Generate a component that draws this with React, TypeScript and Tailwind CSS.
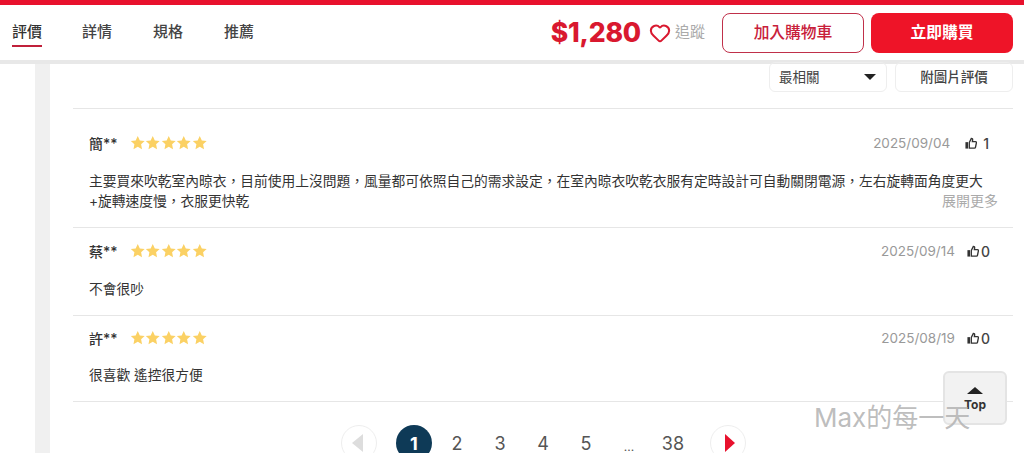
import { Heart } from 'lucide-react'

const cjk = "font-['Inter','Noto_Sans_CJK_TC',sans-serif]"

const reviews = [
  {
    name: '簡**',
    date: '2025/09/04',
    likes: '1',
    lines: [
      '主要買來吹乾室內晾衣，目前使用上沒問題，風量都可依照自己的需求設定，在室內晾衣吹乾衣服有定時設計可自動關閉電源，左右旋轉面角度更大',
      '+旋轉速度慢，衣服更快乾',
    ],
    more: true,
    rowClass: 'pt-[12px] pb-[16px]',
    bodyClass: 'mt-[18px]',
  },
  { name: '蔡**', date: '2025/09/14', likes: '0', lines: ['不會很吵'], rowClass: 'pt-[13px] pb-[16px]', bodyClass: 'mt-[18px]' },
  { name: '許**', date: '2025/08/19', likes: '0', lines: ['很喜歡 遙控很方便'], rowClass: 'pt-[12px] pb-[16px]', bodyClass: 'mt-[17px]' },
]

const Star = () => (
  <svg viewBox="0 0 24 24" className="w-[15.5px] h-[15.5px] fill-[#fbd164]">
    <path d="M12 1.5l3.2 6.9 7.5.9-5.5 5.2 1.4 7.4L12 18.2l-6.6 3.7 1.4-7.4L1.3 9.3l7.5-.9z" />
  </svg>
)

const Thumb = () => (
  <svg viewBox="0 0 14 14" className="w-[12px] h-[12px] text-[#333]">
    <rect x="0.5" y="6" width="3" height="7.5" fill="currentColor" />
    <path
      d="M5 6.5 7.4 1.6c1 0 1.6.7 1.5 1.7L8.6 5.4h3.6c.8 0 1.3.7 1.1 1.4l-1.1 5.2c-.1.6-.6 1-1.2 1H5z"
      fill="none"
      stroke="currentColor"
      strokeWidth="1.6"
    />
  </svg>
)

const ReviewRow = ({ review }: { review: (typeof reviews)[number] }) => (
  <article className={`border-b border-[#e6e6e6] pl-[16px] pr-[23px] ${review.rowClass}`}>
    <div className="flex items-center h-[20px]">
      <span className="text-[14px] font-medium text-[#333] w-[40.5px]">{review.name}</span>
      <div className="flex">
        {[0, 1, 2, 3, 4].map((i) => (
          <Star key={i} />
        ))}
      </div>
      <span className="ml-auto text-[13.5px] text-[#999]">{review.date}</span>
      <span className={`flex items-center font-medium text-[#444] text-[14px] ${review.more ? 'ml-[15px] gap-[6px] pr-[1px]' : 'ml-[12px] gap-[2px]'}`}>
        <Thumb />
        {review.likes}
      </span>
    </div>
    <div className={`${review.bodyClass} text-[13.75px] leading-[20px] text-[#333] relative`}>
      {review.lines.map((line) => (
        <p key={line} className="whitespace-nowrap">{line}</p>
      ))}
      {review.more && (
        <span className="absolute right-[-8px] bottom-0 text-[14px] text-[#aaa]">展開更多</span>
      )}
    </div>
  </article>
)

export default function App() {
  return (
    <div className={`relative w-[1024px] h-[453px] overflow-hidden bg-white ${cjk}`}>
      <header className="h-[64px] border-t-[5px] border-t-[#e8112d] border-b-[4px] border-b-[#e8e8e8] flex items-center justify-between pl-[12px] pr-[11px]">
        <nav className="flex gap-[41px] text-[15px] font-medium text-[#444]">
          <a className="text-[#333] border-b-2 border-[#c0203a] pb-[2px] mt-[3px] -mr-[1px]">評價</a>
          <a className="mt-[3px]">詳情</a>
          <a className="mt-[3px]">規格</a>
          <a className="mt-[3px]">推薦</a>
        </nav>
        <div className="flex items-center">
          <span className="text-[26.5px] font-extrabold text-[#d9182f] tracking-[-0.2px]">$1,280</span>
          <Heart size={22} strokeWidth={2.2} className="ml-[8px] text-[#d9182f]" />
          <span className="ml-[4px] text-[15px] text-[#aaa]">追蹤</span>
          <button className="ml-[17px] w-[142px] h-[40px] rounded-[8px] border border-[#c0304a] text-[15.75px] font-medium text-[#c8203a]">
            加入購物車
          </button>
          <button className="ml-[7px] w-[142px] h-[40px] rounded-[8px] bg-[#ee1428] text-[15.75px] font-bold text-white">
            立即購買
          </button>
        </div>
      </header>

      <div className="flex">
        <div className="ml-[35px] w-[15px] h-[389px] bg-[#f0f0f0]" />
        <main className="ml-[23px] w-[940px]">
          <div className="flex justify-end gap-[8px] h-[45px] border-b border-[#e6e6e6]">
            <button className="w-[118px] h-[30px] -mt-[2px] px-[9px] flex items-center justify-between rounded-[6px] border border-[#eee] text-[13.5px] text-[#444]">
              最相關
              <span className="mr-[1px] border-x-[6px] border-x-transparent border-t-[6px] border-t-[#222]" />
            </button>
            <button className="w-[118px] h-[30px] -mt-[2px] rounded-[6px] border border-[#eee] text-[13.5px] font-medium text-[#444]">
              附圖片評價
            </button>
          </div>
          <div className="mt-[12px] flex flex-col">
            <ReviewRow review={reviews[0]} />
            <ReviewRow review={reviews[1]} />
            <ReviewRow review={reviews[2]} />
          </div>
          <nav className="mt-[23px] ml-[268px] flex items-center text-[18px] text-[#555]">
            <span className="w-[36px] h-[36px] rounded-full border border-[#eee] flex items-center justify-center">
              <span className="border-y-[9px] border-y-transparent border-r-[11px] border-r-[#ddd] mr-[3px]" />
            </span>
            <span className="ml-[19px] w-[36px] h-[36px] rounded-full bg-[#0e3a57] text-white font-bold flex items-center justify-center">1</span>
            <span className="ml-[12px] w-[26px] text-center">2</span>
            <span className="ml-[17px] w-[26px] text-center">3</span>
            <span className="ml-[17px] w-[26px] text-center">4</span>
            <span className="ml-[17px] w-[26px] text-center">5</span>
            <span className="ml-[17px] w-[26px] text-center text-[12px] pt-[8px]">...</span>
            <span className="ml-[16px] w-[30px] text-center">38</span>
            <span className="ml-[22px] w-[36px] h-[36px] rounded-full border border-[#eee] flex items-center justify-center">
              <span className="border-y-[9px] border-y-transparent border-l-[10px] border-l-[#e8112d] ml-[3px]" />
            </span>
          </nav>
        </main>
      </div>

      <button className="absolute left-[943px] top-[371px] w-[64px] h-[54px] rounded-[6px] border-2 border-[#e4e4e4] bg-[#f2f2f2] flex flex-col items-center justify-center pt-[4px] text-[12px] font-bold text-[#333]">
        <span className="border-x-[8px] border-x-transparent border-b-[7px] border-b-[#222] mb-[2px]" />
        Top
      </button>
      <div className="absolute left-[814px] top-[401px] text-[26px] leading-[34px] text-[#b5b5b5]/90 pointer-events-none">Max的每一天</div>
    </div>
  )
}
